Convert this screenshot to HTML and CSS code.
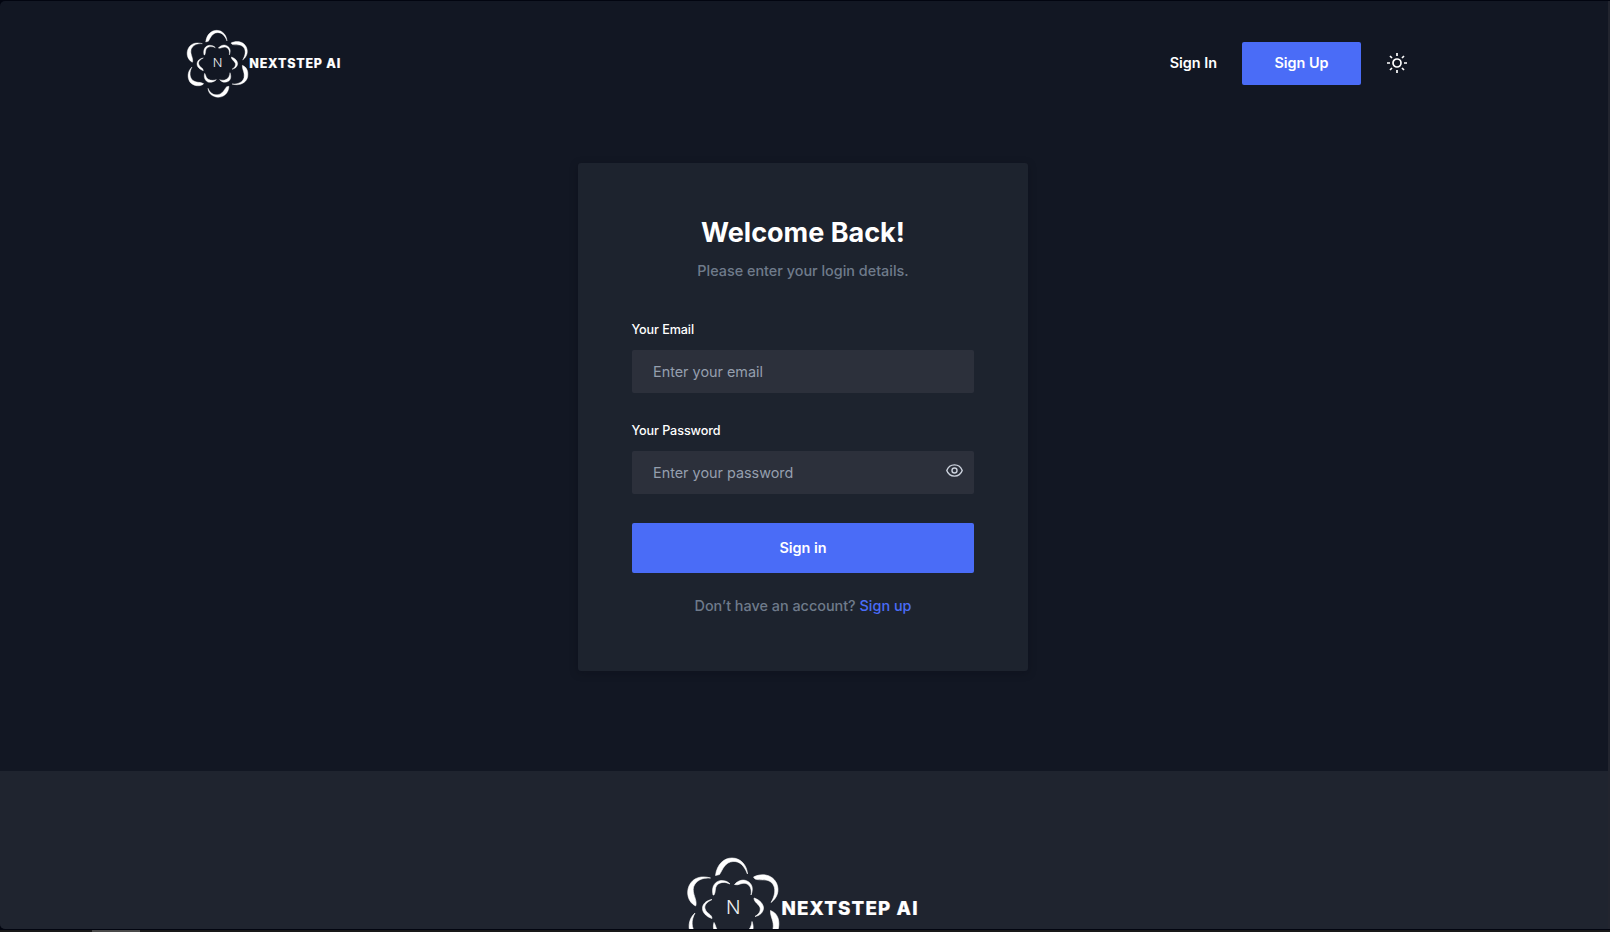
FILE: index.html
```
<!DOCTYPE html>
<html lang="en">
<head>
<meta charset="utf-8">
<title>NextStep AI – Sign In</title>
<link rel="stylesheet" href="styles.css">
</head>
<body>
<div class="window">
  <div class="page">
    <header class="header">
      <svg class="logo" viewBox="30 26 466 208">
        <g id="petals" fill="#fff" stroke="#fff" stroke-width="1.2" stroke-linejoin="round">
          <path d="M89 65C92 42 106 30 122 30C140 30 152 45 153 62C146 44 136 36 124 37C108 38 104 52 97 63Z"/>
          <path d="M165 68C180 60 202 62 211 80C218 96 212 110 200 119C208 106 211 90 202 80C192 70 180 76 168 72Z"/>
          <path d="M199 135C212 140 218 152 215 170C211 188 190 198 168 191C186 192 200 186 204 172C207 156 198 148 199 135Z"/>
          <path d="M159 198C158 220 142 231 126 231C108 229 97 220 96 204C102 218 112 225 124 223C140 222 144 208 152 199Z"/>
          <path d="M83 190C76 199 56 199 44 188C32 174 34 152 48 140C40 155 40 170 50 180C60 188 72 184 83 190Z"/>
          <path d="M49 126C34 118 30 100 36 86C44 68 62 65 79 70C62 69 50 75 45 88C42 102 52 112 50 124Z"/>
          <path d="M84 104C80 85 90 76 100 75C108 75 114 77 118 82C108 77 98 78 92 84C87 90 90 98 86 104Z"/>
          <path d="M127 83C134 75 144 72 152 76C163 81 165 92 160 104C162 92 158 84 150 81C142 78 134 86 127 83Z"/>
          <path d="M82 113C72 118 66 124 68 131C70 141 82 142 82 151C72 148 63 140 63 131C63 122 70 115 82 113Z"/>
          <path d="M166 110C178 114 185 122 185 131C184 139 178 145 168 147C176 142 180 136 178 129C175 121 166 119 166 110Z"/>
          <path d="M86 159C82 172 88 183 98 186C107 187 115 184 121 178C113 181 104 181 97 177C89 172 90 165 86 159Z"/>
          <path d="M131 178C137 186 148 188 157 183C165 178 166 168 162 157C161 166 158 173 151 177C145 181 138 180 131 178Z"/>
        </g>
        <text class="logo-n" x="110" y="140" textLength="29" lengthAdjust="spacingAndGlyphs">N</text>
        <text class="logo-word" x="220" y="143" textLength="273" lengthAdjust="spacing">NEXTSTEP AI</text>
      </svg>
      <nav class="nav">
        <a class="nav-link">Sign In</a>
        <a class="nav-button">Sign Up</a>
        <svg class="sun" viewBox="0 0 20 20" fill="none" stroke="#fff" stroke-width="1.7">
          <circle cx="10" cy="10" r="4"/>
          <path d="M10 0v3M10 17v3M0 10h3M17 10h3M3 3l2 2M15 15l2 2M17 3l-2 2M5 15l-2 2"/>
        </svg>
      </nav>
    </header>
    <main class="main">
      <form class="card">
        <h1 class="title">Welcome Back!</h1>
        <p class="subtitle">Please enter your login details.</p>
        <label class="label">Your Email</label>
        <div class="field">Enter your email</div>
        <label class="label">Your Password</label>
        <div class="field">Enter your password
          <svg class="eye" viewBox="0 0 17 13" fill="none" stroke="#cbd1dc" stroke-width="1.4">
            <path d="M.8 6.5C2.1 2.8 5 .9 8.5.9S14.9 2.8 16.2 6.5C14.9 10.2 12 12.1 8.5 12.1S2.1 10.2.8 6.5Z"/>
            <circle cx="8.5" cy="6.5" r="2.5"/>
          </svg>
        </div>
        <div class="submit">Sign in</div>
        <p class="signup">Don’t have an account? <a class="signup-link">Sign up</a></p>
      </form>
    </main>
    <footer class="footer">
      <svg class="footer-logo" viewBox="30 26 466 208">
        <use href="#petals"/>
        <text class="logo-n" x="110" y="141" textLength="29" lengthAdjust="spacingAndGlyphs">N</text>
        <text class="logo-word" x="221" y="143" textLength="272" lengthAdjust="spacing">NEXTSTEP AI</text>
      </svg>
    </footer>
  </div>
  <div class="taskbar"><div class="task"></div></div>
</div>
</body>
</html>
```
FILE: styles.css
```
* { box-sizing: border-box; margin: 0; }
body { background: #020510; font-family: Inter, sans-serif; font-weight: 500; color: #fff; overflow: hidden; }
.window { width: 1610px; height: 932px; padding-top: 1px; display: flex; flex-direction: column; background: #020510; }
.page { height: 928px; display: flex; flex-direction: column; overflow: hidden; background: #121723; border-right: 2px solid #22252f; border-radius: 5px 0 0 5px; }
.header { height: 126px; flex: none; padding: 0 201px 0 186px; display: flex; align-items: center; justify-content: space-between; }
.logo { width: 155.3px; height: 69.3px; }
.logo-n { font: 300 37px Inter, sans-serif; fill: #eceef1; }
.logo-word { font: 800 37.5px Inter, sans-serif; fill: #fff; stroke: #fff; stroke-width: .4; }
.nav { display: flex; align-items: center; margin-bottom: 1px; font-size: 14.4px; font-weight: 600; line-height: 41px; }
.nav-link { height: 43px; margin-right: 25px; }
.nav-button { width: 119px; height: 43px; text-align: center; background: #4a6cf7; border-radius: 2px; margin-right: 26px; }
.sun { width: 20px; height: 20px; margin-bottom: 1px; }
.main { height: 644px; flex: none; padding-top: 36px; display: flex; justify-content: center; align-items: flex-start; padding-right: 2px; }
.card { width: 450px; height: 508px; background: #1d232e; border-radius: 3px; padding: 55px 54px 0; box-shadow: 0 2px 9px rgba(7, 9, 16, .25); }
.title { font-size: 27px; line-height: 30px; font-weight: 700; text-align: center; }
.subtitle { margin-top: 12px; font-size: 14.4px; line-height: 22px; text-align: center; color: #6f7b8b; margin-bottom: 41px; }
.label { display: block; font-size: 12.6px; letter-spacing: -.08px; line-height: 14px; margin-bottom: 13px; margin-left: -.5px; }
.field { height: 43px; display: flex; align-items: center; justify-content: space-between; padding: 0 11.5px 0 21px; background: #2c303b; border-radius: 2px; font-size: 14.4px; font-weight: 400; color: #959fae; margin-bottom: 31px; }
.eye { width: 17px; height: 13px; margin-bottom: 4px; }
.submit { height: 50px; line-height: 50px; margin-top: -2px; background: #4a6cf7; border-radius: 2px; text-align: center; font-size: 14.4px; font-weight: 600; }
.signup { margin-top: 22px; font-size: 14.4px; line-height: 22px; text-align: center; color: #6f7b8b; }
.signup-link { color: #4a6cf7; font-weight: 550; }
.footer { flex: 1; min-height: 0; background: #1f242f; padding: 85px 0 0 686px; }
.footer-logo { display: block; width: 233px; height: 104px; }
.taskbar { margin-top: 1px; height: 2px; background: #191919; padding-left: 92px; }
.task { width: 48px; height: 2px; background: #4b4b4b; }
```
